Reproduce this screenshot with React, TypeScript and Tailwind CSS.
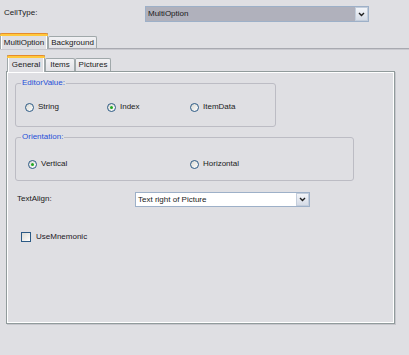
const Chevron = () => (
  <svg width="7" height="5" viewBox="0 0 7 5">
    <path d="M1 1 L3.5 3.5 L6 1" stroke="#1f1f1f" strokeWidth="1.4" fill="none" />
  </svg>
);

type ComboProps = { value: string; className: string; fieldClass: string };

const Combo = ({ value, className, fieldClass }: ComboProps) => (
  <div className={`flex border border-[#9db0c8] shadow-[inset_1px_1px_0_#fff] ${className}`}>
    <div className={`flex-1 flex items-center pl-[2px] leading-[10px] ${fieldClass}`}>{value}</div>
    <div className="w-[13px] flex items-center justify-center border border-[#c3cddb] bg-gradient-to-b from-[#f3f5f9] to-[#d5dbe6]">
      <Chevron />
    </div>
  </div>
);

const Radio = ({ checked }: { checked?: boolean }) => (
  <span className="w-[9px] h-[9px] rounded-full border border-[#2c5a85] bg-gradient-to-br from-[#d8d8d2] to-white flex items-center justify-center">
    {checked && <span className="w-[3px] h-[3px] rounded-full bg-[#22a822]" />}
  </span>
);

type OptionProps = { label: string; checked?: boolean; className?: string };

const Option = ({ label, checked, className = '' }: OptionProps) => (
  <div className={`flex items-center gap-[4px] leading-[10px] ${className}`}>
    <Radio checked={checked} />
    <span>{label}</span>
  </div>
);

type TabProps = { label: string; active?: boolean; className: string };

const Tab = ({ label, active, className }: TabProps) =>
  active ? (
    <div className={`relative z-10 -mb-px flex flex-col self-stretch border-x border-[#a0a8aa] bg-[#dfdfe3] ${className}`}>
      <div className="-mx-px h-[3px] rounded-t-[2px] border-t border-[#e68b2c] bg-[#ffc83c]" />
      <div className="flex flex-1 items-center justify-center border-x border-white leading-[10px]">{label}</div>
    </div>
  ) : (
    <div className={`flex items-center justify-center rounded-t-[2px] border border-b-0 border-[#a0a8aa] bg-gradient-to-b from-[#f2f2f4] to-[#e2e2e6] leading-[10px] ${className}`}>
      {label}
    </div>
  );

type GroupProps = { title: string; className: string; children: React.ReactNode };

const Group = ({ title, className, children }: GroupProps) => (
  <fieldset className={`rounded-[3px] border border-[#bcbcc4] ${className}`}>
    <legend className="ml-[5px] px-[1px] leading-[10px] text-[#1f4fd8]">{title}</legend>
    {children}
  </fieldset>
);

export default function App() {
  return (
    <div className="h-[355px] w-[409px] overflow-hidden bg-[#dfdfe3] font-['Liberation_Sans',Arial,sans-serif] text-[8px] text-[#1a1a1a]">
      <div className="flex h-[33px] items-start pt-[6px]">
        <span className="ml-[4px] mt-[2px] w-[141px] leading-[10px]">CellType:</span>
        <Combo value="MultiOption" className="h-[16px] w-[224px]" fieldClass="bg-[#b0b1bc] text-[#1a1a1a]" />
      </div>

      <div className="flex h-[16px] items-end border-b border-[#a8a9b0] shadow-[0_1px_0_#c9c9cf]">
        <Tab label="MultiOption" active className="w-[48px]" />
        <Tab label="Background" className="h-[12px] w-[49px]" />
      </div>

      <div className="ml-[7px] mt-[6px] flex h-[16px] items-end">
        <Tab label="General" active className="w-[38px]" />
        <Tab label="Items" className="h-[13px] w-[30px]" />
        <Tab label="Pictures" className="h-[13px] w-[36px]" />
      </div>

      <div className="ml-[6px] h-[253px] w-[389px] border border-[#919b9c] shadow-[inset_1px_1px_0_#fff,inset_-1px_-1px_0_#fff,1px_1px_0_#c6c6cc]">
        <Group title="EditorValue:" className="ml-[8px] mt-[6px] w-[261px]">
          <div className="flex pb-[14px] pl-[9px] pt-[14px]">
            <Option label="String" className="w-[82px]" />
            <Option label="Index" checked className="w-[83px]" />
            <Option label="ItemData" />
          </div>
        </Group>

        <Group title="Orientation:" className="ml-[8px] mt-[5px] w-[339px]">
          <div className="flex pb-[11px] pl-[12px] pt-[17px]">
            <Option label="Vertical" checked className="w-[162px]" />
            <Option label="Horizontal" />
          </div>
        </Group>

        <div className="mt-[11px] flex items-start pl-[10px]">
          <span className="mt-[2px] w-[118px] leading-[10px]">TextAlign:</span>
          <Combo value="Text right of Picture" className="h-[15px] w-[175px]" fieldClass="bg-white" />
        </div>

        <div className="mt-[25px] flex items-center gap-[5px] pl-[14px] leading-[10px]">
          <span className="h-[10px] w-[10px] border border-[#2c5a85] bg-gradient-to-br from-[#dcdcd6] to-white" />
          <span className="text-[#1c1726]">UseMnemonic</span>
        </div>
      </div>
    </div>
  );
}
